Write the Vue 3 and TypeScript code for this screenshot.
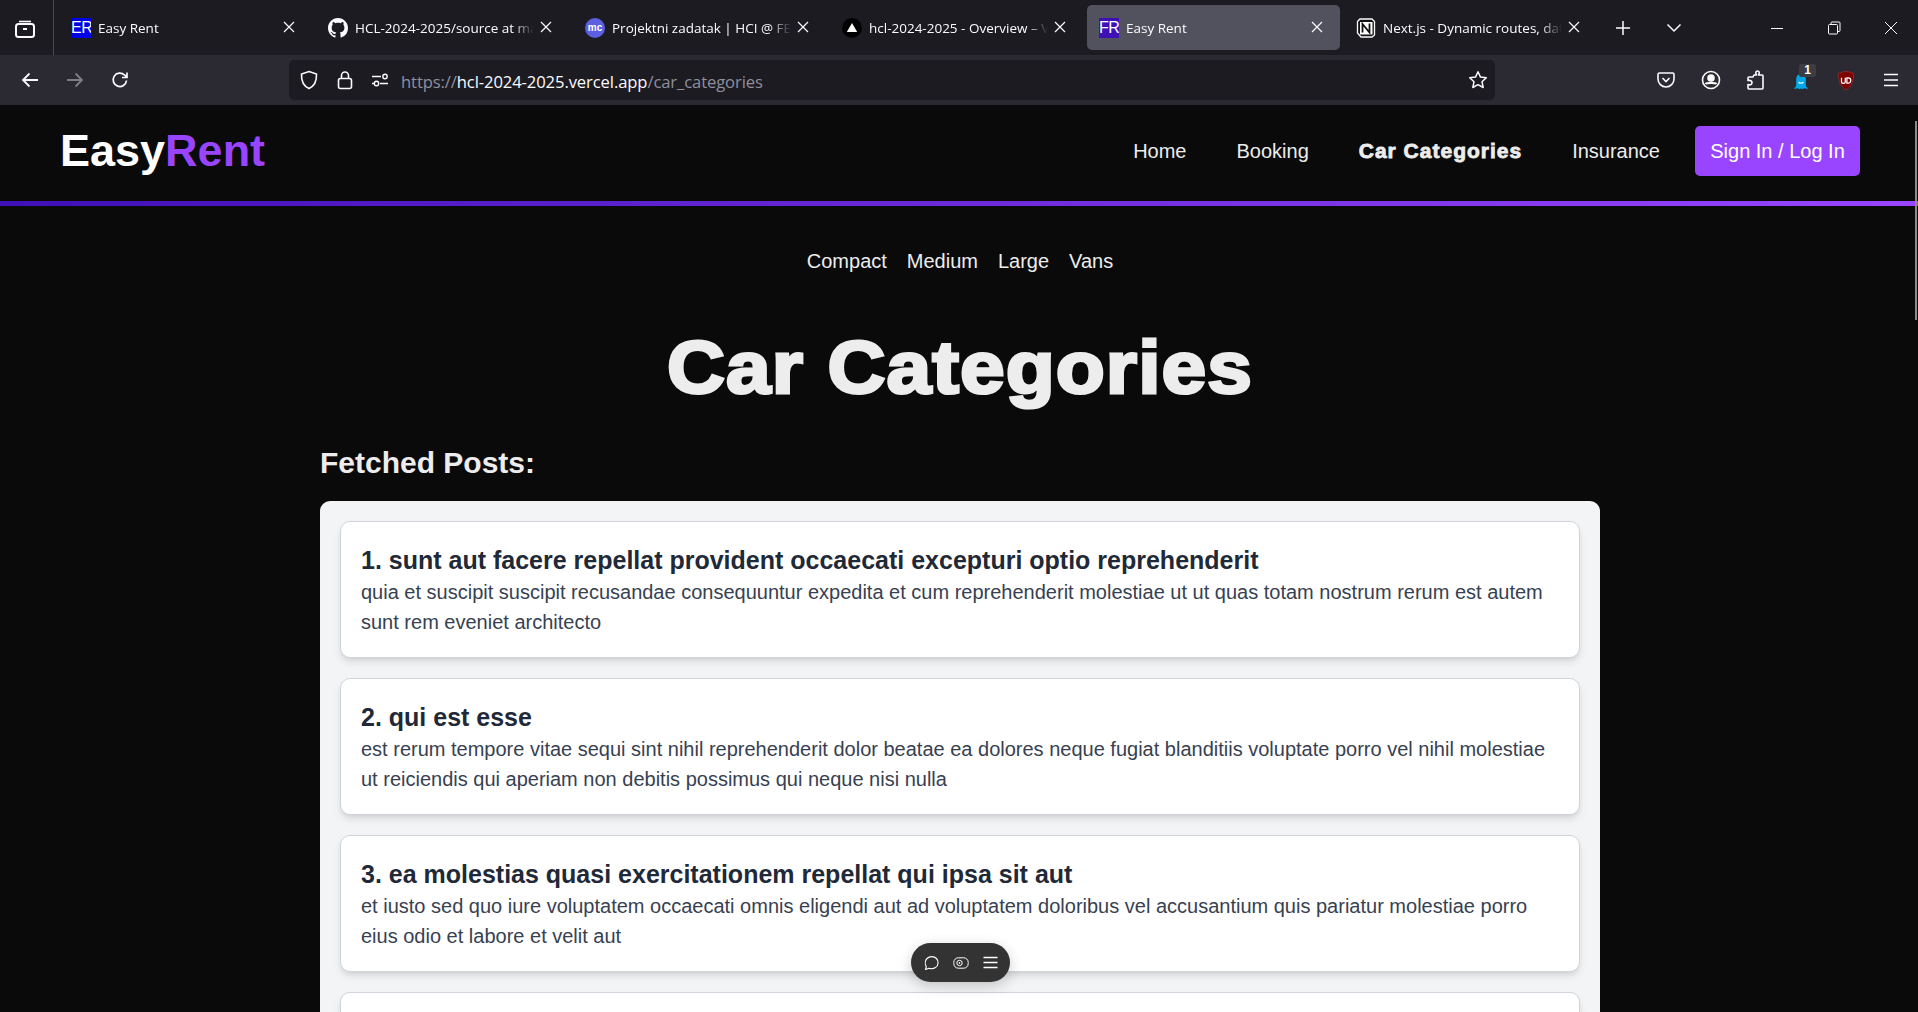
<template>
  <div class="screen">
    <div class="tabbar">
      <button class="tab-btn library" aria-label="Tabs">
        <svg width="24" height="24" viewBox="0 0 24 24" fill="none" stroke="#fbfbfe" stroke-width="2">
          <path d="M6 5.500h12" stroke-width="1.600" />
          <rect x="3" y="8" width="18" height="13" rx="2.500" />
          <path d="M10 13h4" />
        </svg>
      </button>
      <div class="tabs">
        <div v-for="tab in tabs" :key="tab.title" class="tab" :class="{ active: tab.active }">
          <span v-if="tab.icon === 'er' || tab.icon === 'fr'" class="fav-text" :class="tab.icon">{{ tab.icon.toUpperCase() }}</span>
          <svg v-else-if="tab.icon === 'github'" class="fav" viewBox="0 0 16 16" fill="#fbfbfe">
            <path d="M8 0C3.580 0 0 3.580 0 8c0 3.540 2.290 6.530 5.470 7.590.4.070.55-.17.55-.38 0-.19-.01-.82-.01-1.490-2.010.37-2.530-.49-2.690-.94-.09-.23-.48-.94-.82-1.130-.28-.15-.68-.52-.01-.53.63-.01 1.080.58 1.230.82.72 1.210 1.870.87 2.330.66.07-.52.28-.87.51-1.070-1.780-.2-3.640-.89-3.640-3.950 0-.87.31-1.590.82-2.150-.08-.2-.36-1.020.08-2.120 0 0 .67-.21 2.200.82.64-.18 1.320-.27 2-.27s1.360.09 2 .27c1.530-1.040 2.200-.82 2.200-.82.44 1.100.16 1.920.08 2.120.51.56.82 1.270.82 2.150 0 3.070-1.870 3.750-3.650 3.950.29.25.54.73.54 1.480 0 1.070-.01 1.930-.01 2.200 0 .21.15.46.55.38A8.010 8.010 0 0 0 16 8c0-4.420-3.580-8-8-8z" />
          </svg>
          <span v-else-if="tab.icon === 'mc'" class="fav-mc">mc</span>
          <svg v-else-if="tab.icon === 'vercel'" class="fav" viewBox="0 0 20 20">
            <circle cx="10" cy="10" r="10" fill="#000" />
            <path d="M10 5l5.200 9H4.800z" fill="#fff" />
          </svg>
          <svg v-else class="fav" viewBox="0 0 20 20">
            <path d="M1.500 3.500 4 1h12l2.500 2.500V17L16 19H5l-3.500-4z" fill="#111" stroke="#fbfbfe" stroke-width="1.300" />
            <rect x="4" y="4" width="12.500" height="12.500" fill="#fff" />
            <path d="M6.500 14.500V6l7 8.500V5.500" fill="none" stroke="#111" stroke-width="1.800" />
          </svg>
          <span class="tab-title">{{ tab.title }}</span>
          <svg class="tab-close" width="12" height="12" viewBox="0 0 12 12" stroke="#fbfbfe" stroke-width="1.200">
            <path d="M1 1l10 10M11 1L1 11" />
          </svg>
        </div>
        <svg class="tab-plus" width="16" height="16" viewBox="0 0 16 16" stroke="#fbfbfe" stroke-width="1.500">
          <path d="M8 1v14M1 8h14" />
        </svg>
        <svg class="tab-more" width="16" height="10" viewBox="0 0 16 10" fill="none" stroke="#fbfbfe" stroke-width="1.500">
          <path d="M1.500 1.500 8 8l6.500-6.500" />
        </svg>
      </div>
      <div class="window-btns">
        <svg width="14" height="14" viewBox="0 0 14 14" stroke="#fbfbfe" stroke-width="1"><path d="M1 7.500h12" /></svg>
        <svg width="14" height="14" viewBox="0 0 14 14" fill="none" stroke="#fbfbfe" stroke-width="1">
          <rect x="1.500" y="3.500" width="9" height="9.500" rx="1" />
          <path d="M4 3.500V2a1 1 0 0 1 1-1h7a1 1 0 0 1 1 1v7.500a1 1 0 0 1-1 1h-1.500" />
        </svg>
        <svg width="14" height="14" viewBox="0 0 14 14" stroke="#fbfbfe" stroke-width="1"><path d="M1 1l12 12M13 1L1 13" /></svg>
      </div>
    </div>

    <div class="toolbar">
      <div class="nav-btns">
        <svg width="18" height="18" viewBox="0 0 18 18" fill="none" stroke="#fbfbfe" stroke-width="1.800"><path d="M17 9H2M8.500 2.500 2 9l6.500 6.500" /></svg>
        <svg width="18" height="18" viewBox="0 0 18 18" fill="none" stroke="#7d7d83" stroke-width="1.800"><path d="M1 9h15M9.500 2.500 16 9l-6.500 6.500" /></svg>
        <svg width="18" height="18" viewBox="0 0 18 18" fill="none" stroke="#fbfbfe" stroke-width="1.700"><path d="M15.500 9.500a6.700 6.700 0 1 1-2-5.500L16 6.200M16 1.500v5h-5" /></svg>
      </div>
      <div class="urlbar">
        <svg width="20" height="20" viewBox="0 0 20 20" fill="none" stroke="#fbfbfe" stroke-width="1.600"><path d="M10 1.500 17.500 4c.3 7-2 12-7.500 14.500C4.500 16 2.200 11 2.500 4z" /></svg>
        <svg width="18" height="20" viewBox="0 0 18 20" fill="none" stroke="#fbfbfe" stroke-width="1.600">
          <rect x="2.500" y="8.500" width="13" height="10" rx="2" />
          <path d="M5.500 8.500V5.500a3.500 3.500 0 0 1 7 0v3" />
        </svg>
        <svg width="18" height="16" viewBox="0 0 18 16" fill="none" stroke="#fbfbfe" stroke-width="1.400">
          <path d="M1 4.500h9M1 11.500h2M9 11.500h8" />
          <circle cx="14" cy="4.500" r="2.200" />
          <circle cx="5.500" cy="11.500" r="2.200" />
        </svg>
        <div class="url"><span class="dim">https://</span>hcl-2024-2025.vercel.app<span class="dim">/car_categories</span></div>
        <svg width="20" height="20" viewBox="0 0 20 20" fill="none" stroke="#fbfbfe" stroke-width="1.500"><path d="M10 1.800l2.500 5.300 5.800.7-4.300 4 1.200 5.700L10 14.700l-5.200 2.800L6 11.800l-4.300-4 5.800-.7z" stroke-linejoin="round" /></svg>
      </div>
      <div class="ext-btns">
        <span class="ext"><svg width="20" height="20" viewBox="0 0 20 20" fill="none" stroke="#fbfbfe" stroke-width="1.600"><path d="M3.500 3h13A1.500 1.500 0 0 1 18 4.500V9a8 8 0 0 1-16 0V4.500A1.500 1.500 0 0 1 3.500 3z" /><path d="M6.500 8 10 11.500 13.500 8" /></svg></span>
        <span class="ext"><svg width="20" height="20" viewBox="0 0 20 20" fill="none" stroke="#fbfbfe" stroke-width="1.600"><circle cx="10" cy="10" r="8.500" /><circle cx="10" cy="8" r="3" fill="#fbfbfe" /><path d="M4.500 14c1-1.500 10-1.500 11 0" stroke-width="2.200" /></svg></span>
        <span class="ext"><svg width="20" height="20" viewBox="0 0 20 20" fill="none" stroke="#fbfbfe" stroke-width="1.600" stroke-linejoin="round"><path d="M8 5h2.500C9 2.500 10 1 11.500 1S14 2.500 12.500 5H16a1 1 0 0 1 1 1v12a1 1 0 0 1-1 1H3a1 1 0 0 1-1-1v-3.500C5 15.500 6 14 6 12.500S4.500 10 2 10.500V8a1 1 0 0 1 1-1h4z" /></svg></span>
        <span class="ext ghost">
          <svg class="ghost-icon" width="16" height="18" viewBox="0 0 20 22"><path d="M10 1c4 0 6 3 6 7v7c0 2 2 3 3 4l-3 .5-2-1-1.500 1.500-2.500-1-2.500 1L6 18.500l-2 1L1 19c1-1 3-2 3-4V8c0-4 2-7 6-7z" fill="#00a8e8" /><path d="M7 11c1 2 5 2 6 0" fill="none" stroke="#fff" stroke-width="1.500" /></svg>
          <span class="badge">1</span>
        </span>
        <span class="ext"><svg width="18" height="21" viewBox="0 0 20 22"><path d="M10 .5 18.500 3c.5 8-2.500 15-8.500 18.500C4 18 1 11 1.500 3z" fill="#800000" stroke="#a04040" stroke-width=".6" /><path d="M5 8v4a2 2 0 0 0 4.200 0V8" fill="none" stroke="#fff" stroke-width="1.400" /><path d="M11 8h1.500a2.800 3 0 0 1 0 6H11z" fill="none" stroke="#fff" stroke-width="1.400" /></svg></span>
        <span class="ext"><svg width="18" height="16" viewBox="0 0 18 16" stroke="#fbfbfe" stroke-width="1.600"><path d="M2 2.500h14M2 8h14M2 13.500h14" /></svg></span>
      </div>
    </div>

    <div class="page">
      <header class="site-header">
        <div class="logo">Easy<span class="accent">Rent</span></div>
        <nav class="site-nav">
          <a v-for="link in navLinks" :key="link" :class="{ current: link === 'Car Categories' }">{{ link }}</a>
        </nav>
        <button class="cta">Sign In / Log In</button>
      </header>

      <main class="main">
        <div class="sub-nav">
          <a v-for="cat in categories" :key="cat">{{ cat }}</a>
        </div>
        <h1 class="page-title">Car Categories</h1>
        <div class="content">
          <h2 class="fetched">Fetched Posts:</h2>
          <ul class="posts">
            <li v-for="(post, i) in posts" :key="post.title" class="post">
              <h3>{{ i + 1 }}. {{ post.title }}</h3>
              <p>{{ post.body }}</p>
            </li>
          </ul>
        </div>
      </main>

      <div class="scroll-thumb"></div>
      <div class="dev-pill">
        <svg width="16" height="16" viewBox="0 0 16 16" fill="none" stroke="#fff" stroke-width="1.100"><path d="M2.500 14.500 3.300 11.500C1.800 9 2 5.500 4 3.500 6.500 1 11 1 13.500 3.500s2 7-1 9c-2.500 1.500-5 1.300-6.500.7z" stroke-linejoin="round" /></svg>
        <svg width="16" height="12" viewBox="0 0 16 12" fill="none" stroke="#fff" stroke-width="1"><rect x=".8" y=".8" width="14.400" height="10.400" rx="4.500" /><circle cx="6.500" cy="6" r="2.700" /><circle cx="6.500" cy="6" r=".5" fill="#fff" /></svg>
        <svg width="15" height="13" viewBox="0 0 15 13" stroke="#fff" stroke-width="1.400"><path d="M.5 1.500h14M.5 6.500h14M.5 11.500h14" /></svg>
      </div>
    </div>
  </div>
</template>

<script setup lang="ts">
interface Tab {
  title: string
  icon: 'er' | 'fr' | 'github' | 'mc' | 'vercel' | 'notion'
  active?: boolean
}

interface Post {
  title: string
  body: string
}

const tabs: Tab[] = [
  { title: 'Easy Rent', icon: 'er' },
  { title: 'HCL-2024-2025/source at main', icon: 'github' },
  { title: 'Projektni zadatak | HCI @ FESB', icon: 'mc' },
  { title: 'hcl-2024-2025 - Overview – Vercel', icon: 'vercel' },
  { title: 'Easy Rent ', icon: 'fr', active: true },
  { title: 'Next.js - Dynamic routes, data', icon: 'notion' }
]

const navLinks = ['Home', 'Booking', 'Car Categories', 'Insurance']
const categories = ['Compact', 'Medium', 'Large', 'Vans']

const posts: Post[] = [
  {
    title: 'sunt aut facere repellat provident occaecati excepturi optio reprehenderit',
    body: 'quia et suscipit suscipit recusandae consequuntur expedita et cum reprehenderit molestiae ut ut quas totam nostrum rerum est autem sunt rem eveniet architecto'
  },
  {
    title: 'qui est esse',
    body: 'est rerum tempore vitae sequi sint nihil reprehenderit dolor beatae ea dolores neque fugiat blanditiis voluptate porro vel nihil molestiae ut reiciendis qui aperiam non debitis possimus qui neque nisi nulla'
  },
  {
    title: 'ea molestias quasi exercitationem repellat qui ipsa sit aut',
    body: 'et iusto sed quo iure voluptatem occaecati omnis eligendi aut ad voluptatem doloribus vel accusantium quis pariatur molestiae porro eius odio et labore et velit aut'
  },
  {
    title: 'eum et est occaecati',
    body: 'ullam et saepe reiciendis voluptatem adipisci sit amet autem assumenda provident rerum culpa quis hic commodi nesciunt rem tenetur doloremque ipsam iure quis sunt voluptatem rerum illo velit'
  }
]
</script>

<style scoped>
.screen {
  width: 1918px;
  height: 1012px;
  overflow: hidden;
  display: flex;
  flex-direction: column;
  background: #0a0a0a;
  font-family: "Liberation Sans", Arial, sans-serif;
}

/* browser chrome */
.tabbar {
  flex: 0 0 55px;
  display: flex;
  background: #1c1b22;
  color: #fbfbfe;
  font-family: "Open Sans", "Noto Sans", sans-serif;
}

.library {
  flex: 0 0 54px;
  display: flex;
  align-items: center;
  justify-content: center;
  padding: 0 4px 0 0;
  background: none;
  border: 0;
  border-right: 1px solid #4a4a50;
  margin-right: 5px;
}

.tabs {
  flex: 1;
  display: flex;
  align-items: flex-start;
  gap: 4px;
  padding-top: 5px;
}

.tab {
  flex: 0 0 253px;
  min-width: 0;
  height: 45px;
  display: flex;
  align-items: center;
  gap: 7px;
  padding: 0 17px 0 12px;
  box-sizing: border-box;
  border-radius: 5px;
  font-size: 13.500px;
}

.tab.active {
  background: #52525e;
}

.fav {
  flex: 0 0 20px;
  width: 20px;
  height: 20px;
}

.fav-text {
  flex: 0 0 20px;
  height: 20px;
  font: 16px/20px "Liberation Sans", sans-serif;
  text-align: center;
  color: #fff;
  overflow: hidden;
  letter-spacing: -0.5px;
}

.fav-text.er {
  background: #0000e6;
}

.fav-text.fr {
  background: #3f0fb7;
}

.fav-mc {
  flex: 0 0 20px;
  height: 20px;
  border-radius: 50%;
  background: #5c5fe0;
  font: bold 10px/20px "Liberation Sans", sans-serif;
  text-align: center;
  color: #fff;
}

.tab-title {
  flex: 1;
  min-width: 0;
  white-space: nowrap;
  overflow: hidden;
  -webkit-mask-image: linear-gradient(to right, #000 88%, transparent);
  mask-image: linear-gradient(to right, #000 88%, transparent);
}

.tab-close {
  flex: 0 0 12px;
  margin-left: -1px;
  margin-top: -2px;
}

.tab-plus {
  margin: 15px 0 0 14px;
}

.tab-more {
  margin: 18px 0 0 31px;
}

.window-btns {
  display: flex;
  align-items: center;
  gap: 43px;
  padding: 0 20px 0 0;
}

.toolbar {
  flex: 0 0 50px;
  display: flex;
  align-items: center;
  background: #2b2a33;
  box-sizing: border-box;
}

.nav-btns {
  flex: 0 0 289px;
  display: flex;
  align-items: center;
  gap: 27px;
  padding-left: 21px;
  box-sizing: border-box;
}

.urlbar {
  flex: 0 0 1206px;
  height: 40px;
  display: flex;
  align-items: center;
  gap: 17px;
  padding: 0 7px 0 10px;
  box-sizing: border-box;
  background: #1c1b22;
  border-radius: 5px;
}

.url {
  flex: 1;
  margin-left: -5px;
  padding-top: 2px;
  font: 16.600px "Open Sans", "Noto Sans", sans-serif;
  color: #fbfbfe;
  letter-spacing: -0.1px;
}

.dim {
  color: #8f8f9d;
}

.ext-btns {
  flex: 1;
  display: flex;
  align-items: center;
  padding-left: 148px;
}

.ext {
  position: relative;
  flex: 0 0 45px;
  display: flex;
  justify-content: center;
}

.ghost-icon {
  margin-top: 4px;
}

.badge {
  position: absolute;
  top: -5px;
  left: 21px;
  width: 17px;
  height: 13px;
  border-radius: 2px;
  background: #3c3c42;
  color: #fff;
  font: bold 12px/13px "Liberation Sans", sans-serif;
  text-align: center;
}

/* page */
.page {
  position: relative;
  flex: 1;
  min-height: 0;
  overflow: hidden;
}

.site-header {
  width: 1920px;
  height: 101px;
  box-sizing: border-box;
  padding: 0 60px 4px;
  display: flex;
  align-items: center;
  border-bottom: 5px solid transparent;
  border-image: linear-gradient(to right, #3f0fb7, #9945ff) 1;
  color: #ededed;
}

.logo {
  flex: 1;
  font-size: 45px;
  font-weight: 700;
  color: #fff;
}

.accent {
  color: #9945ff;
}

.site-nav {
  display: flex;
  align-items: center;
  gap: 50px;
  font-size: 20px;
}

.current {
  font-weight: 700;
  font-size: 21px;
  -webkit-text-stroke: 0.8px #ededed;
  letter-spacing: 1px;
}

.cta {
  width: 165px;
  height: 50px;
  margin-left: 35px;
  padding: 0;
  border: 0;
  border-radius: 5px;
  background: #9945ff;
  color: #fff;
  font: 20px "Liberation Sans", sans-serif;
}

.main {
  width: 1920px;
  color: #ededed;
}

.sub-nav {
  display: flex;
  justify-content: center;
  gap: 20px;
  padding-top: 44px;
  font-size: 20px;
  line-height: 23px;
}

.page-title {
  margin: 38px 0 0;
  text-align: center;
  font-size: 75px;
  line-height: 112px;
  font-weight: 700;
  -webkit-text-stroke: 3px #ededed;
  letter-spacing: 1px;
  transform: scaleX(1.07);
}

.content {
  width: 1280px;
  margin: 0 auto;
}

.fetched {
  margin: 22px 0 20px;
  font-size: 30px;
  line-height: 36px;
  font-weight: 700;
}

.posts {
  list-style: none;
  margin: 0;
  padding: 20px;
  display: flex;
  flex-direction: column;
  gap: 20px;
  background: #f3f4f6;
  border-radius: 10px;
}

.post {
  padding: 20px;
  background: #fff;
  border: 1px solid #d1d5db;
  border-radius: 10px;
  box-shadow: 0 5px 8px -1px rgba(0, 0, 0, 0.1), 0 2px 5px -2px rgba(0, 0, 0, 0.1);
}

.post h3 {
  margin: 0 0 -2px;
  font-size: 25px;
  line-height: 37px;
  font-weight: 700;
  color: #1f2937;
}

.post p {
  margin: 0;
  font-size: 20px;
  line-height: 30px;
  color: #374151;
}

.scroll-thumb {
  position: absolute;
  top: 16px;
  right: 1px;
  width: 2px;
  height: 199px;
  background: #8a8a8a;
}

.dev-pill {
  position: absolute;
  left: 911px;
  top: 838px;
  width: 99px;
  height: 39px;
  display: flex;
  align-items: center;
  justify-content: center;
  gap: 14px;
  background: #333;
  border-radius: 20px;
  box-shadow: 0 4px 14px rgba(0, 0, 0, 0.2);
}
</style>
